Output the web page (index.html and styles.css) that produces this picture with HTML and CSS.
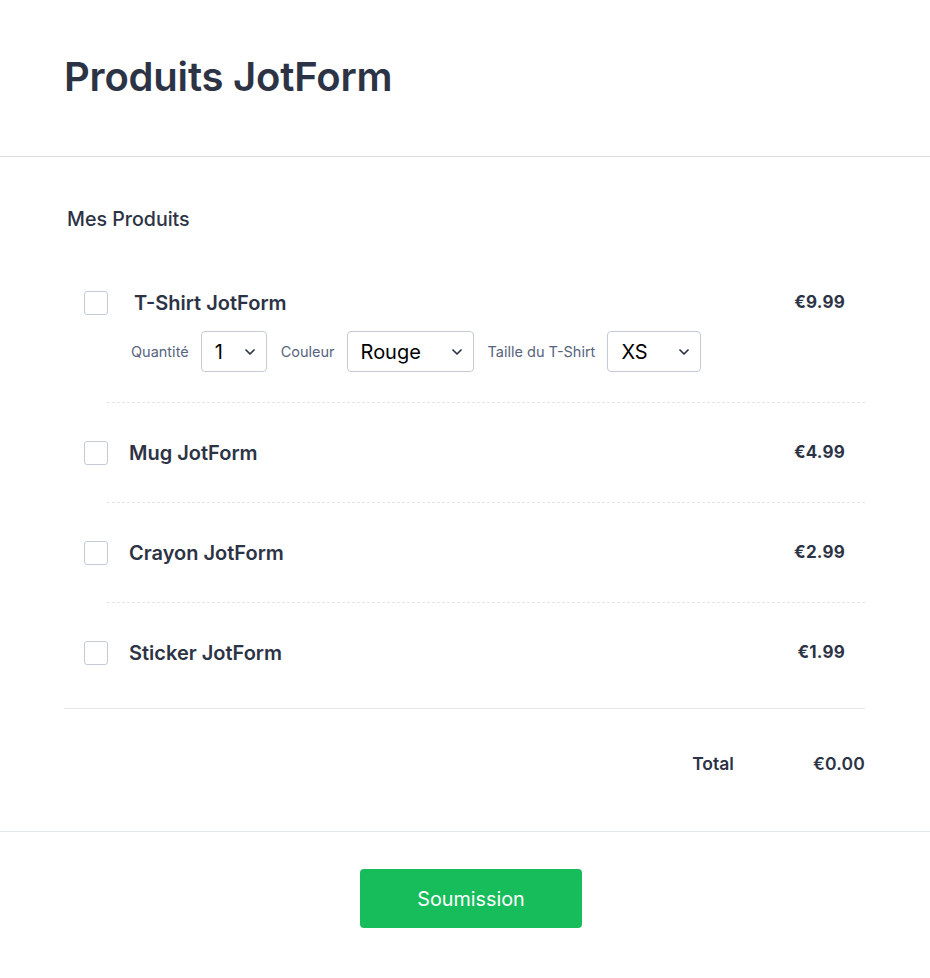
FILE: index.html
```html
<!DOCTYPE html>
<html lang="fr">
<head>
<meta charset="utf-8">
<title>Produits JotForm</title>
<link rel="stylesheet" href="styles.css">
</head>
<body>
<header class="form-header">
  <h1 class="form-title">Produits JotForm</h1>
</header>
<main class="form-body">
  <div class="section-label">Mes Produits</div>
  <div class="products">
    <div class="product product-first">
      <span class="checkbox"></span>
      <div class="product-main">
        <div class="product-top">
          <span class="product-name name-tshirt">T-Shirt JotForm</span>
          <span class="product-price">€9.99</span>
        </div>
        <div class="options">
          <span class="opt-label">Quantité</span>
          <div class="select sel-qty"><span>1</span><svg class="chev" viewBox="0 0 10 6" width="10" height="6"><path d="M1 1l4 4 4-4" fill="none" stroke="#2c3345" stroke-width="1.7" stroke-linecap="round" stroke-linejoin="round"/></svg></div>
          <span class="opt-label">Couleur</span>
          <div class="select sel-color"><span>Rouge</span><svg class="chev" viewBox="0 0 10 6" width="10" height="6"><path d="M1 1l4 4 4-4" fill="none" stroke="#2c3345" stroke-width="1.7" stroke-linecap="round" stroke-linejoin="round"/></svg></div>
          <span class="opt-label">Taille du T-Shirt</span>
          <div class="select sel-size"><span>XS</span><svg class="chev" viewBox="0 0 10 6" width="10" height="6"><path d="M1 1l4 4 4-4" fill="none" stroke="#2c3345" stroke-width="1.7" stroke-linecap="round" stroke-linejoin="round"/></svg></div>
        </div>
      </div>
    </div>
    <div class="sep"></div>
    <div class="product">
      <span class="checkbox"></span>
      <div class="product-main">
        <div class="product-top">
          <span class="product-name">Mug JotForm</span>
          <span class="product-price">€4.99</span>
        </div>
      </div>
    </div>
    <div class="sep"></div>
    <div class="product">
      <span class="checkbox"></span>
      <div class="product-main">
        <div class="product-top">
          <span class="product-name">Crayon JotForm</span>
          <span class="product-price">€2.99</span>
        </div>
      </div>
    </div>
    <div class="sep"></div>
    <div class="product product-last">
      <span class="checkbox"></span>
      <div class="product-main">
        <div class="product-top">
          <span class="product-name">Sticker JotForm</span>
          <span class="product-price">€1.99</span>
        </div>
      </div>
    </div>
  </div>
  <div class="total-row">
    <span class="total-label">Total</span>
    <span class="total-value">€0.00</span>
  </div>
</main>
<footer class="form-footer">
  <button class="submit" type="button">Soumission</button>
</footer>
</body>
</html>
```
FILE: styles.css
```css
* { box-sizing: border-box; }
html, body { margin: 0; padding: 0; background: #fff; }
body {
  font-family: Inter, "Noto Sans", "Liberation Sans", sans-serif;
  color: #2c3345;
  width: 930px;
}
.form-header {
  border-bottom: 1px solid #dcdee6;
  padding: 53px 64px 55px;
}
.form-title {
  margin: 0;
  font-size: 40px;
  line-height: 48px;
  font-weight: 600;
  color: #2c3345;
  letter-spacing: -0.2px;
}
.form-body {
  padding: 49px 65px 0 64px;
  border-bottom: 1px solid #e3e5ec;
}
.section-label {
  font-size: 19.6px;
  line-height: 24px;
  font-weight: 500;
  padding-left: 3px;
  margin-top: 1px;
  margin-bottom: 22px;
}
.products {
  border-bottom: 1px solid #e3e5ec;
}
.product {
  display: flex;
  align-items: flex-start;
  padding: 38px 20px 37px 20px;
}
.product-first { padding-top: 38px; padding-bottom: 30px; }
.product-last { padding-bottom: 43px; }
.checkbox {
  flex: 0 0 auto;
  width: 24px;
  height: 24px;
  border: 1px solid #c3cad8;
  border-radius: 3px;
  background: #fff;
}
.product-main {
  flex: 1 1 auto;
  margin-left: 21px;
}
.product-top {
  display: flex;
  justify-content: space-between;
  align-items: center;
  height: 24px;
}
.product-name {
  font-size: 20px;
  font-weight: 600;
  line-height: 24px;
}
.name-tshirt { margin-left: 5px; }
.product-price {
  font-size: 17px;
  font-weight: 700;
  line-height: 20px;
  margin-top: -2px;
  letter-spacing: 0.2px;
}
.options {
  display: flex;
  align-items: center;
  margin-top: 16px;
  margin-left: 2px;
}
.opt-label {
  font-size: 14.5px;
  color: #57647e;
  margin-right: 12px;
}
.select {
  display: flex;
  align-items: center;
  justify-content: space-between;
  height: 41px;
  border: 1px solid #c3cad8;
  border-radius: 4px;
  padding: 0 11px 0 13px;
  font-size: 20px;
  color: #000;
  margin-right: 14px;
}
.sel-qty { width: 66px; }
.sel-color { width: 127px; }
.sel-size { width: 94px; }
.chev { display: block; }
.sep {
  margin-left: 43px;
  border-top: 1px dashed #e3e5ec;
}
.total-row {
  display: flex;
  justify-content: flex-end;
  align-items: center;
  padding: 45px 0 57px;
  line-height: 20px;
  font-size: 17.5px;
  font-weight: 600;
}
.total-label { margin-right: 79px; }
.total-value { font-weight: 600; letter-spacing: 0.2px; }
.form-footer {
  display: flex;
  justify-content: center;
  padding: 37px 0 50px 12px;
}
.submit {
  width: 222px;
  height: 59px;
  background: #18bd5b;
  border: none;
  border-radius: 4px;
  color: #fff;
  font-family: Inter, "Noto Sans", sans-serif;
  font-size: 19.8px;
  font-weight: 400;
}
```
